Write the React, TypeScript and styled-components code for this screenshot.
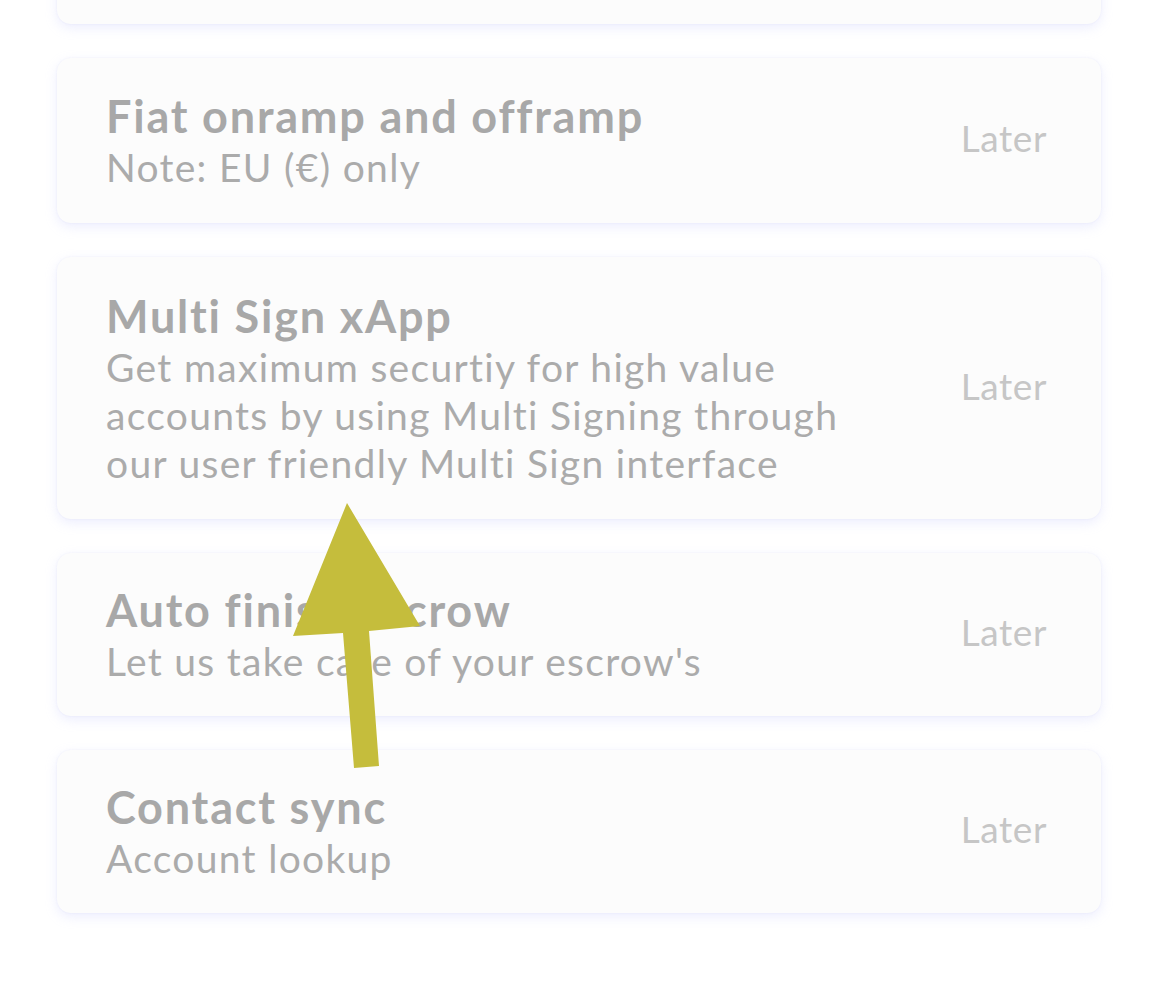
import styled, { createGlobalStyle } from 'styled-components';

const Global = createGlobalStyle`
  html, body {
    margin: 0;
    padding: 0;
    background: #ffffff;
    font-family: Lato, "Noto Sans", "Liberation Sans", sans-serif;
    font-variant-ligatures: none;
    -webkit-font-smoothing: antialiased;
  }
`;

const Page = styled.div`
  position: relative;
  width: 1170px;
  height: 990px;
  overflow: hidden;
  background: #fff;
`;

const List = styled.div`
  display: flex;
  flex-direction: column;
  gap: 34px;
  margin: -141px 69px 0 57px;
`;

const Card = styled.div<{ $height: number }>`
  display: flex;
  align-items: center;
  justify-content: space-between;
  box-sizing: border-box;
  height: ${p => p.$height}px;
  padding: 0 54px 0 49px;
  background: #fcfcfc;
  border-radius: 14px;
  box-shadow: 0 4px 12px rgba(190, 195, 250, 0.28), 0 0 2px rgba(200, 200, 240, 0.25);
`;

const Texts = styled.div`
  display: flex;
  flex-direction: column;
  max-width: 800px;
  margin-top: -1px;
`;

const Title = styled.div`
  font-size: 45px;
  font-weight: 700;
  line-height: 54px;
  letter-spacing: 1.8px;
  color: #a8a8a8;
`;

const Sub = styled.div`
  font-size: 39px;
  font-weight: 400;
  line-height: 48px;
  letter-spacing: 1.3px;
  color: #ababab;
  white-space: nowrap;
`;

const Later = styled.div`
  font-size: 37px;
  letter-spacing: 0.6px;
  color: #c6c6c6;
  white-space: nowrap;
  margin-bottom: 6px;
`;

const Arrow = styled.svg`
  position: absolute;
  left: 0;
  top: 0;
  pointer-events: none;
`;

type Item = { title: string; sub: string[]; height: number };

const items: Item[] = [
  { title: 'Fiat onramp and offramp', sub: ['Note: EU (€) only'], height: 165 },
  {
    title: 'Multi Sign xApp',
    sub: [
      'Get maximum securtiy for high value',
      'accounts by using Multi Signing through',
      'our user friendly Multi Sign interface',
    ],
    height: 262,
  },
  { title: 'Auto finish escrow', sub: ["Let us take care of your escrow's"], height: 163 },
  { title: 'Contact sync', sub: ['Account lookup'], height: 163 },
];

export default function App() {
  return (
    <Page>
      <Global />
      <List>
        <Card $height={165} />
        {items.map(item => (
          <Card key={item.title} $height={item.height}>
            <Texts>
              <Title>{item.title}</Title>
              {item.sub.map(line => <Sub key={line}>{line}</Sub>)}
            </Texts>
            <Later>Later</Later>
          </Card>
        ))}
      </List>
      <Arrow width="1170" height="990" viewBox="0 0 1170 990">
        <polygon
          points="347,503 420,626 369,631 379,766 354,768 343,633 293,636"
          fill="#c5bd3c"
        />
      </Arrow>
    </Page>
  );
}
